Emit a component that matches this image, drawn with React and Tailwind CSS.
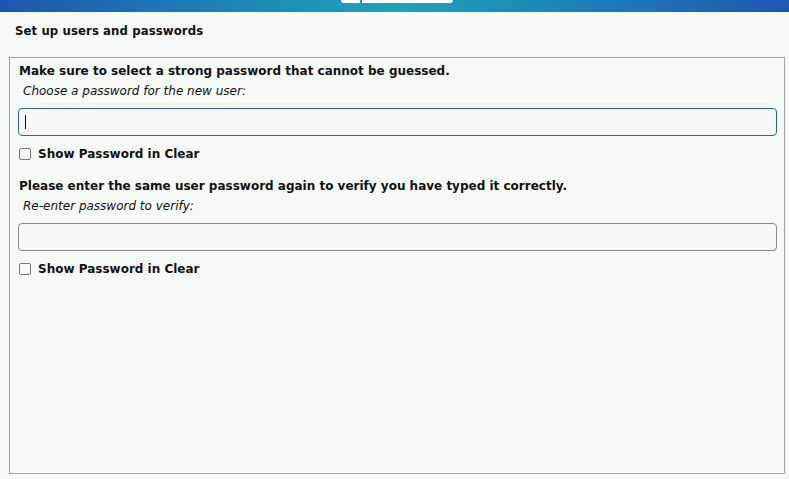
export default function App() {
  return (
    <div className="w-[789px] h-[479px] bg-[#f5faf6] flex flex-col overflow-hidden" style={{ fontFamily: '"DejaVu Sans", sans-serif' }}>
      <div className="h-[12px] relative bg-[linear-gradient(90deg,#1f55ad_0%,#1c86b8_30%,#1ea2ba_50%,#1c86b8_70%,#1f56b0_100%)]">
        <div className="absolute left-[341px] top-0 w-[112px] h-[3px] bg-white rounded-b-[3px] flex">
          <div className="ml-[19px] w-[2px] h-full bg-[#1e93b6]"></div>
        </div>
      </div>
      <div className="h-[45px] pl-[15px] pt-[11px]">
        <h1 className="text-[13px] leading-[16px] font-bold text-[#111] tracking-[0.1px]" style={{ fontFamily: '"DejaVu Sans Condensed", "DejaVu Sans", sans-serif', fontStretch: 'condensed' }}>Set up users and passwords</h1>
      </div>
      <div className="ml-[9px] w-[776px] h-[417px] border border-[#9ca19e] pt-[5px] pl-[8px] pr-[7px] text-[#111]">
        <p className="text-[12px] font-bold leading-[16px] pl-[1px]">Make sure to select a strong password that cannot be guessed.</p>
        <p className="text-[12px] italic leading-[16px] mt-[4px] pl-[5px]">Choose a password for the new user:</p>
        <div className="mt-[9px] h-[28px] rounded-[4px] border border-[#2a5fb3] bg-[#f7f7f7] flex items-center pl-[6px]">
          <div className="w-[1px] h-[14px] bg-[#111]"></div>
        </div>
        <label className="flex items-center gap-[7px] mt-[10px] pl-[1px]">
          <span className="w-[12px] h-[12px] border border-[#777] rounded-[2px] bg-[#fafafa]"></span>
          <span className="text-[12px] font-bold leading-[16px]">Show Password in Clear</span>
        </label>
        <p className="text-[12px] font-bold leading-[16px] mt-[16px] pl-[1px]">Please enter the same user password again to verify you have typed it correctly.</p>
        <p className="text-[12px] italic leading-[16px] mt-[4px] pl-[5px]">Re-enter password to verify:</p>
        <div className="mt-[9px] h-[28px] rounded-[4px] border border-[#8a8a8a] bg-[#f7f7f7]"></div>
        <label className="flex items-center gap-[7px] mt-[10px] pl-[1px]">
          <span className="w-[12px] h-[12px] border border-[#777] rounded-[2px] bg-[#fafafa]"></span>
          <span className="text-[12px] font-bold leading-[16px]">Show Password in Clear</span>
        </label>
      </div>
    </div>
  );
}
